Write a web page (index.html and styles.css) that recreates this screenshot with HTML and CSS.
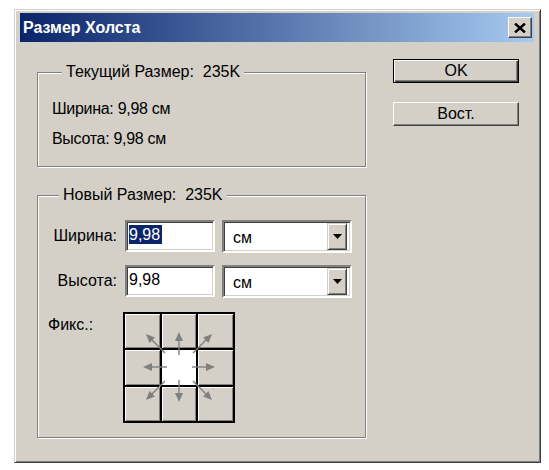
FILE: index.html
```html
<!DOCTYPE html>
<html lang="ru">
<head>
<meta charset="utf-8">
<title>Размер Холста</title>
<link rel="stylesheet" href="styles.css">
</head>
<body>
<div class="window">
  <div class="titlebar">
    <span class="title">Размер Холста</span>
    <span class="close"><svg width="12" height="10" viewBox="0 0 12 10"><path d="M1 0.5 L11 9.5 M11 0.5 L1 9.5" stroke="#000" stroke-width="2.4" fill="none"/></svg></span>
  </div>
  <div class="client">
    <div class="groups">
      <div class="group g1">
        <span class="legend">Текущий Размер:&nbsp; 235K</span>
        <div class="line">Ширина: 9,98 см</div>
        <div class="line">Высота: 9,98 см</div>
      </div>
      <div class="group g2">
        <span class="legend">Новый Размер:&nbsp; 235K</span>
        <div class="row">
          <span class="lbl">Ширина:</span>
          <div class="input"><span class="selected">9,98</span></div>
          <div class="combo"><span class="combo-text">см</span><span class="drop"><svg width="9" height="5" viewBox="0 0 9 5"><path d="M0 0 H9 L4.5 5 Z" fill="#000"/></svg></span></div>
        </div>
        <div class="row">
          <span class="lbl">Высота:</span>
          <div class="input"><span>9,98</span></div>
          <div class="combo"><span class="combo-text">см</span><span class="drop"><svg width="9" height="5" viewBox="0 0 9 5"><path d="M0 0 H9 L4.5 5 Z" fill="#000"/></svg></span></div>
        </div>
        <div class="fix-row">
          <span class="fix-lbl">Фикс.:</span>
          <div class="anchor">
            <div class="cell"></div><div class="cell"></div><div class="cell"></div>
            <div class="cell"></div><div class="cell center"></div><div class="cell"></div>
            <div class="cell"></div><div class="cell"></div><div class="cell"></div>
            <svg class="arrows" width="112" height="111" viewBox="0 0 112 111">
              <g stroke="#808080" stroke-width="1.4" fill="none">
                <path d="M56 43 V28"/>
                <path d="M56 68 V82"/>
                <path d="M44 55 H28"/>
                <path d="M69 55 H84"/>
                <path d="M42 41 L29 28"/>
                <path d="M70 41 L83 28"/>
                <path d="M42 69 L29 82"/>
                <path d="M70 69 L83 82"/>
              </g>
              <g fill="#808080">
                <path d="M56 20 L60 29 L52 29 Z"/>
                <path d="M56 90 L60 81 L52 81 Z"/>
                <path d="M20 55 L29 51 L29 59 Z"/>
                <path d="M92 55 L83 51 L83 59 Z"/>
                <path d="M23 22 L32 25.5 L26.5 31 Z"/>
                <path d="M89 22 L85.5 31 L80 25.5 Z"/>
                <path d="M23 88 L26.5 79 L32 84.5 Z"/>
                <path d="M89 88 L80 84.5 L85.5 79 Z"/>
              </g>
            </svg>
          </div>
        </div>
      </div>
    </div>
    <div class="buttons">
      <div class="btn default"><span class="btn-in">OK</span></div>
      <div class="btn"><span class="btn-in">Вост.</span></div>
    </div>
  </div>
</div>
</body>
</html>
```

FILE: styles.css
```css
* { box-sizing: border-box; }

html, body {
  margin: 0;
  background: #ffffff;
}

body {
  padding: 9px 0 0 14px;
  font-family: "Liberation Sans", Arial, sans-serif;
  font-size: 16px;
  color: #000;
}

.window {
  width: 527px;
  height: 454px;
  background: #d4d0c8;
  border: 1px solid;
  border-color: #d4d0c8 #404040 #404040 #d4d0c8;
  box-shadow: inset 1px 1px 0 #ffffff, inset -1px -1px 0 #808080;
  padding: 3px 6px 0 5px;
  display: flex;
  flex-direction: column;
}

.titlebar {
  height: 29px;
  background: linear-gradient(to right, #0a246a, #a6caf0);
  display: flex;
  align-items: center;
  justify-content: space-between;
  padding: 0 2px 0 3px;
}

.title {
  color: #fff;
  font-weight: bold;
  font-size: 16px;
  line-height: 18px;
}

.close {
  width: 24px;
  height: 21px;
  background: #d4d0c8;
  border: 1px solid;
  border-color: #ffffff #404040 #404040 #ffffff;
  box-shadow: inset -1px -1px 0 #808080;
  display: flex;
  align-items: center;
  justify-content: center;
}

.client {
  display: flex;
  padding: 0 15px 0 17px;
}

.groups {
  width: 329px;
  display: flex;
  flex-direction: column;
  padding-top: 30px;
}

.group {
  position: relative;
  border: 1px solid #808080;
  box-shadow: 1px 1px 0 #ffffff, inset 1px 1px 0 #ffffff;
}

.legend {
  position: absolute;
  top: -10px;
  background: #d4d0c8;
  padding: 0 4px;
  line-height: 18px;
  white-space: nowrap;
}

.g1 {
  height: 95px;
  padding: 27px 0 0 14px;
  display: flex;
  flex-direction: column;
  gap: 12px;
}

.g1 .legend { left: 24px; }

.line {
  line-height: 18px;
  letter-spacing: -0.3px;
}

.g2 {
  height: 243px;
  margin-top: 28px;
  padding: 24px 0 0 10px;
  display: flex;
  flex-direction: column;
}

.g2 .legend { left: 21px; }

.row {
  display: flex;
  align-items: center;
  height: 32px;
  margin-bottom: 13px;
}

.lbl {
  width: 69px;
  text-align: right;
  margin-right: 8px;
}

.input {
  width: 90px;
  height: 32px;
  background: #fff;
  border: 2px solid;
  border-color: #808080 #ffffff #ffffff #808080;
  box-shadow: inset 1px 1px 0 #404040, inset -1px -1px 0 #d4d0c8;
  padding: 3px 0 0 2px;
  margin-right: 7px;
  line-height: 19px;
}

.selected {
  background: #0a246a;
  color: #fff;
  display: inline-block;
  padding-right: 2px;
}

.combo {
  width: 130px;
  height: 33px;
  background: #fff;
  border: 2px solid;
  border-color: #808080 #ffffff #ffffff #808080;
  box-shadow: inset 1px 1px 0 #404040, inset -1px -1px 0 #d4d0c8;
  display: flex;
  align-items: center;
  justify-content: space-between;
  padding: 2px 3px 2px 9px;
}

.combo-text { padding-top: 3px; }

.drop {
  width: 20px;
  height: 27px;
  background: #d4d0c8;
  border: 1px solid;
  border-color: #d4d0c8 #404040 #404040 #d4d0c8;
  box-shadow: inset 1px 1px 0 #ffffff, inset -1px -1px 0 #808080;
  display: flex;
  align-items: center;
  justify-content: center;
}

.fix-row {
  display: flex;
  align-items: flex-start;
  margin-top: 2px;
}

.fix-lbl {
  width: 75px;
  padding-top: 4px;
}

.anchor {
  position: relative;
  width: 112px;
  height: 111px;
  display: grid;
  grid-template-columns: repeat(3, 1fr);
  grid-template-rows: repeat(3, 1fr);
  background: #000;
  border: 2px solid #000;
  gap: 2px;
}

.cell {
  background: #d4d0c8;
  box-shadow: inset 1px 1px 0 #ffffff, inset -1px -1px 0 #808080;
}

.cell.center {
  background: #ffffff;
  box-shadow: none;
}

.arrows {
  position: absolute;
  left: -2px;
  top: -2px;
}

.buttons {
  margin-left: 27px;
  padding-top: 17px;
  display: flex;
  flex-direction: column;
  gap: 19px;
}

.btn {
  width: 126px;
  height: 24px;
  background: #d4d0c8;
  border: 1px solid;
  border-color: #ffffff #404040 #404040 #ffffff;
  box-shadow: inset -1px -1px 0 #808080;
  display: flex;
  align-items: center;
  justify-content: center;
}

.btn.default {
  border: 1px solid #000;
  box-shadow: inset 1px 1px 0 #ffffff, inset -1px -1px 0 #404040, inset -2px -2px 0 #808080;
}

.btn-in { line-height: 18px; }
```
